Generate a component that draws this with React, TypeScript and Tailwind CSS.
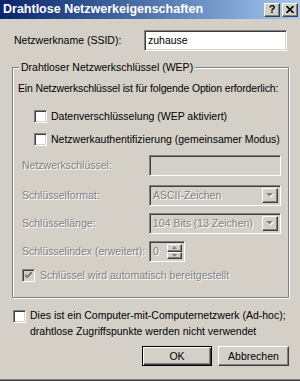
import React from "react";

const sunken =
  "border border-t-[#808080] border-l-[#808080] border-b-white border-r-white shadow-[inset_1px_1px_0_#404040,inset_-1px_-1px_0_#d4d0c8]";
const raised =
  "border border-t-white border-l-white border-b-[#404040] border-r-[#404040] shadow-[inset_-1px_-1px_0_#808080] bg-[#d4d0c8]";
const disabledText = "text-[#808080] [text-shadow:1px_1px_0_#ffffff]";

const Checkbox = ({ checked, disabled }: { checked?: boolean; disabled?: boolean }) => (
  <span
    className={`${sunken} flex h-[13px] w-[13px] shrink-0 items-center justify-center ${
      disabled ? "bg-[#d4d0c8]" : "bg-white"
    }`}
  >
    {checked && (
      <svg width="7" height="7" viewBox="0 0 7 7">
        <path d="M0 2 L2 4 L7 -1 M0 3 L2 5 L7 0 M0 4 L2 6 L7 1" stroke="#808080" strokeWidth="1" fill="none" />
      </svg>
    )}
  </span>
);

const DropArrow = () => (
  <span className={`${raised} flex h-full w-[16px] items-center justify-center`}>
    <svg width="8" height="5" viewBox="0 0 8 5">
      <path d="M1 1 H8 L4.5 4.5 Z" fill="#ffffff" />
      <path d="M0 0 H7 L3.5 3.5 Z" fill="#808080" />
    </svg>
  </span>
);

const Combo = ({ value }: { value: string }) => (
  <div className={`${sunken} flex h-[21px] w-[132px] items-stretch bg-[#d4d0c8] p-[2px]`}>
    <span className={`flex-1 truncate pl-[1px] leading-[15px] ${disabledText}`}>{value}</span>
    <DropArrow />
  </div>
);

const KeyRow = ({ label, children, mt }: { label: string; children: React.ReactNode; mt: string }) => (
  <div className={`flex items-center ${mt}`}>
    <span className={`ml-[9px] w-[127px] ${disabledText}`}>{label}</span>
    {children}
  </div>
);

export default function App() {
  return (
    <div className="flex h-[381px] w-[300px] flex-col overflow-hidden bg-[#d4d0c8] font-['Liberation_Sans_Narrow','Liberation_Sans',sans-serif] text-[10.5px] leading-[13px] text-black">
      {/* title bar */}
      <div className="flex h-[19px] shrink-0 items-center bg-gradient-to-r from-[#0a246a] to-[#a6caf0] pl-[3px] pr-[2px]">
        <span className="flex-1 font-['Liberation_Sans',sans-serif] text-[12.5px] font-bold text-white">
          Drahtlose Netzwerkeigenschaften
        </span>
        <div className="flex gap-[2px]">
          <span className={`${raised} flex h-[14px] w-[16px] items-center justify-center font-['Liberation_Sans',sans-serif] text-[11px] font-bold leading-none`}>
            ?
          </span>
          <span className={`${raised} flex h-[14px] w-[16px] items-center justify-center`}>
            <svg width="8" height="7" viewBox="0 0 8 7">
              <path d="M0.5 0 L7.5 7 M7.5 0 L0.5 7" stroke="#000" strokeWidth="1.6" />
            </svg>
          </span>
        </div>
      </div>

      <div className="flex flex-1 flex-col">
        {/* SSID */}
        <div className="mt-[11px] flex items-center">
          <span className="ml-[14px] w-[130px]">Netzwerkname (SSID):</span>
          <div className={`${sunken} flex h-[21px] w-[143px] items-center bg-white px-[3px]`}>zuhause</div>
        </div>

        {/* group box */}
        <div className="relative ml-[12px] mt-[16px] w-[277px] border border-[#808080] pb-[15px] shadow-[inset_1px_1px_0_#ffffff,1px_1px_0_#ffffff]">
          <span className="absolute -top-[7px] left-[6px] bg-[#d4d0c8] px-[2px]">
            Drahtloser Netzwerkschlüssel (WEP)
          </span>
          <div className="ml-[5px] mt-[14px] tracking-[-0.15px]">
            Ein Netzwerkschlüssel ist für folgende Option erforderlich:
          </div>
          <div className="ml-[21px] mt-[15px] flex items-center gap-[4px]">
            <Checkbox />
            <span>Datenverschlüsselung (WEP aktiviert)</span>
          </div>
          <div className="ml-[21px] mt-[10px] flex items-center gap-[4px]">
            <Checkbox />
            <span>Netzwerkauthentifizierung (gemeinsamer Modus)</span>
          </div>

          <KeyRow label="Netzwerkschlüssel:" mt="mt-[9px]">
            <div className={`${sunken} h-[21px] w-[132px] bg-[#d4d0c8]`} />
          </KeyRow>
          <KeyRow label="Schlüsselformat:" mt="mt-[9px]">
            <Combo value="ASCII-Zeichen" />
          </KeyRow>
          <KeyRow label="Schlüssellänge:" mt="mt-[7px]">
            <Combo value="104 Bits (13 Zeichen)" />
          </KeyRow>
          <KeyRow label="Schlüsselindex (erweitert):" mt="mt-[7px]">
            <div className={`${sunken} flex h-[21px] w-[36px] items-stretch bg-[#d4d0c8] p-[2px]`}>
              <span className={`flex-1 pl-[1px] leading-[15px] ${disabledText}`}>0</span>
              <div className="flex w-[15px] flex-col">
                <span className={`${raised} flex flex-1 items-center justify-center`}>
                  <svg width="5" height="3" viewBox="0 0 5 3">
                    <path d="M2.5 0 L5 3 H0 Z" fill="#808080" />
                  </svg>
                </span>
                <span className={`${raised} flex flex-1 items-center justify-center`}>
                  <svg width="5" height="3" viewBox="0 0 5 3">
                    <path d="M0 0 H5 L2.5 3 Z" fill="#808080" />
                  </svg>
                </span>
              </div>
            </div>
          </KeyRow>
          <div className="ml-[9px] mt-[7px] flex items-center gap-[5px]">
            <Checkbox checked disabled />
            <span className={disabledText}>Schlüssel wird automatisch bereitgestellt</span>
          </div>
        </div>

        {/* ad-hoc */}
        <div className="ml-[13px] mt-[9px] flex items-start gap-[4px] leading-[16px]">
          <span className="mt-[3px]">
            <Checkbox />
          </span>
          <span>
            Dies ist ein Computer-mit-Computernetzwerk (Ad-hoc);
            <br />
            drahtlose Zugriffspunkte werden nicht verwendet
          </span>
        </div>

        {/* buttons */}
        <div className="mt-[7px] flex justify-end gap-[6px] pr-[11px]">
          <button className="flex h-[20px] w-[70px] items-center justify-center border border-black bg-[#d4d0c8] shadow-[inset_1px_1px_0_#ffffff,inset_-1px_-1px_0_#404040,inset_-2px_-2px_0_#808080]">
            OK
          </button>
          <button className={`${raised} flex h-[20px] w-[71px] items-center justify-center`}>Abbrechen</button>
        </div>
      </div>
      <div className="h-[1px] shrink-0 bg-[#808080]" />
      <div className="h-[1px] shrink-0 bg-[#404040]" />
    </div>
  );
}
